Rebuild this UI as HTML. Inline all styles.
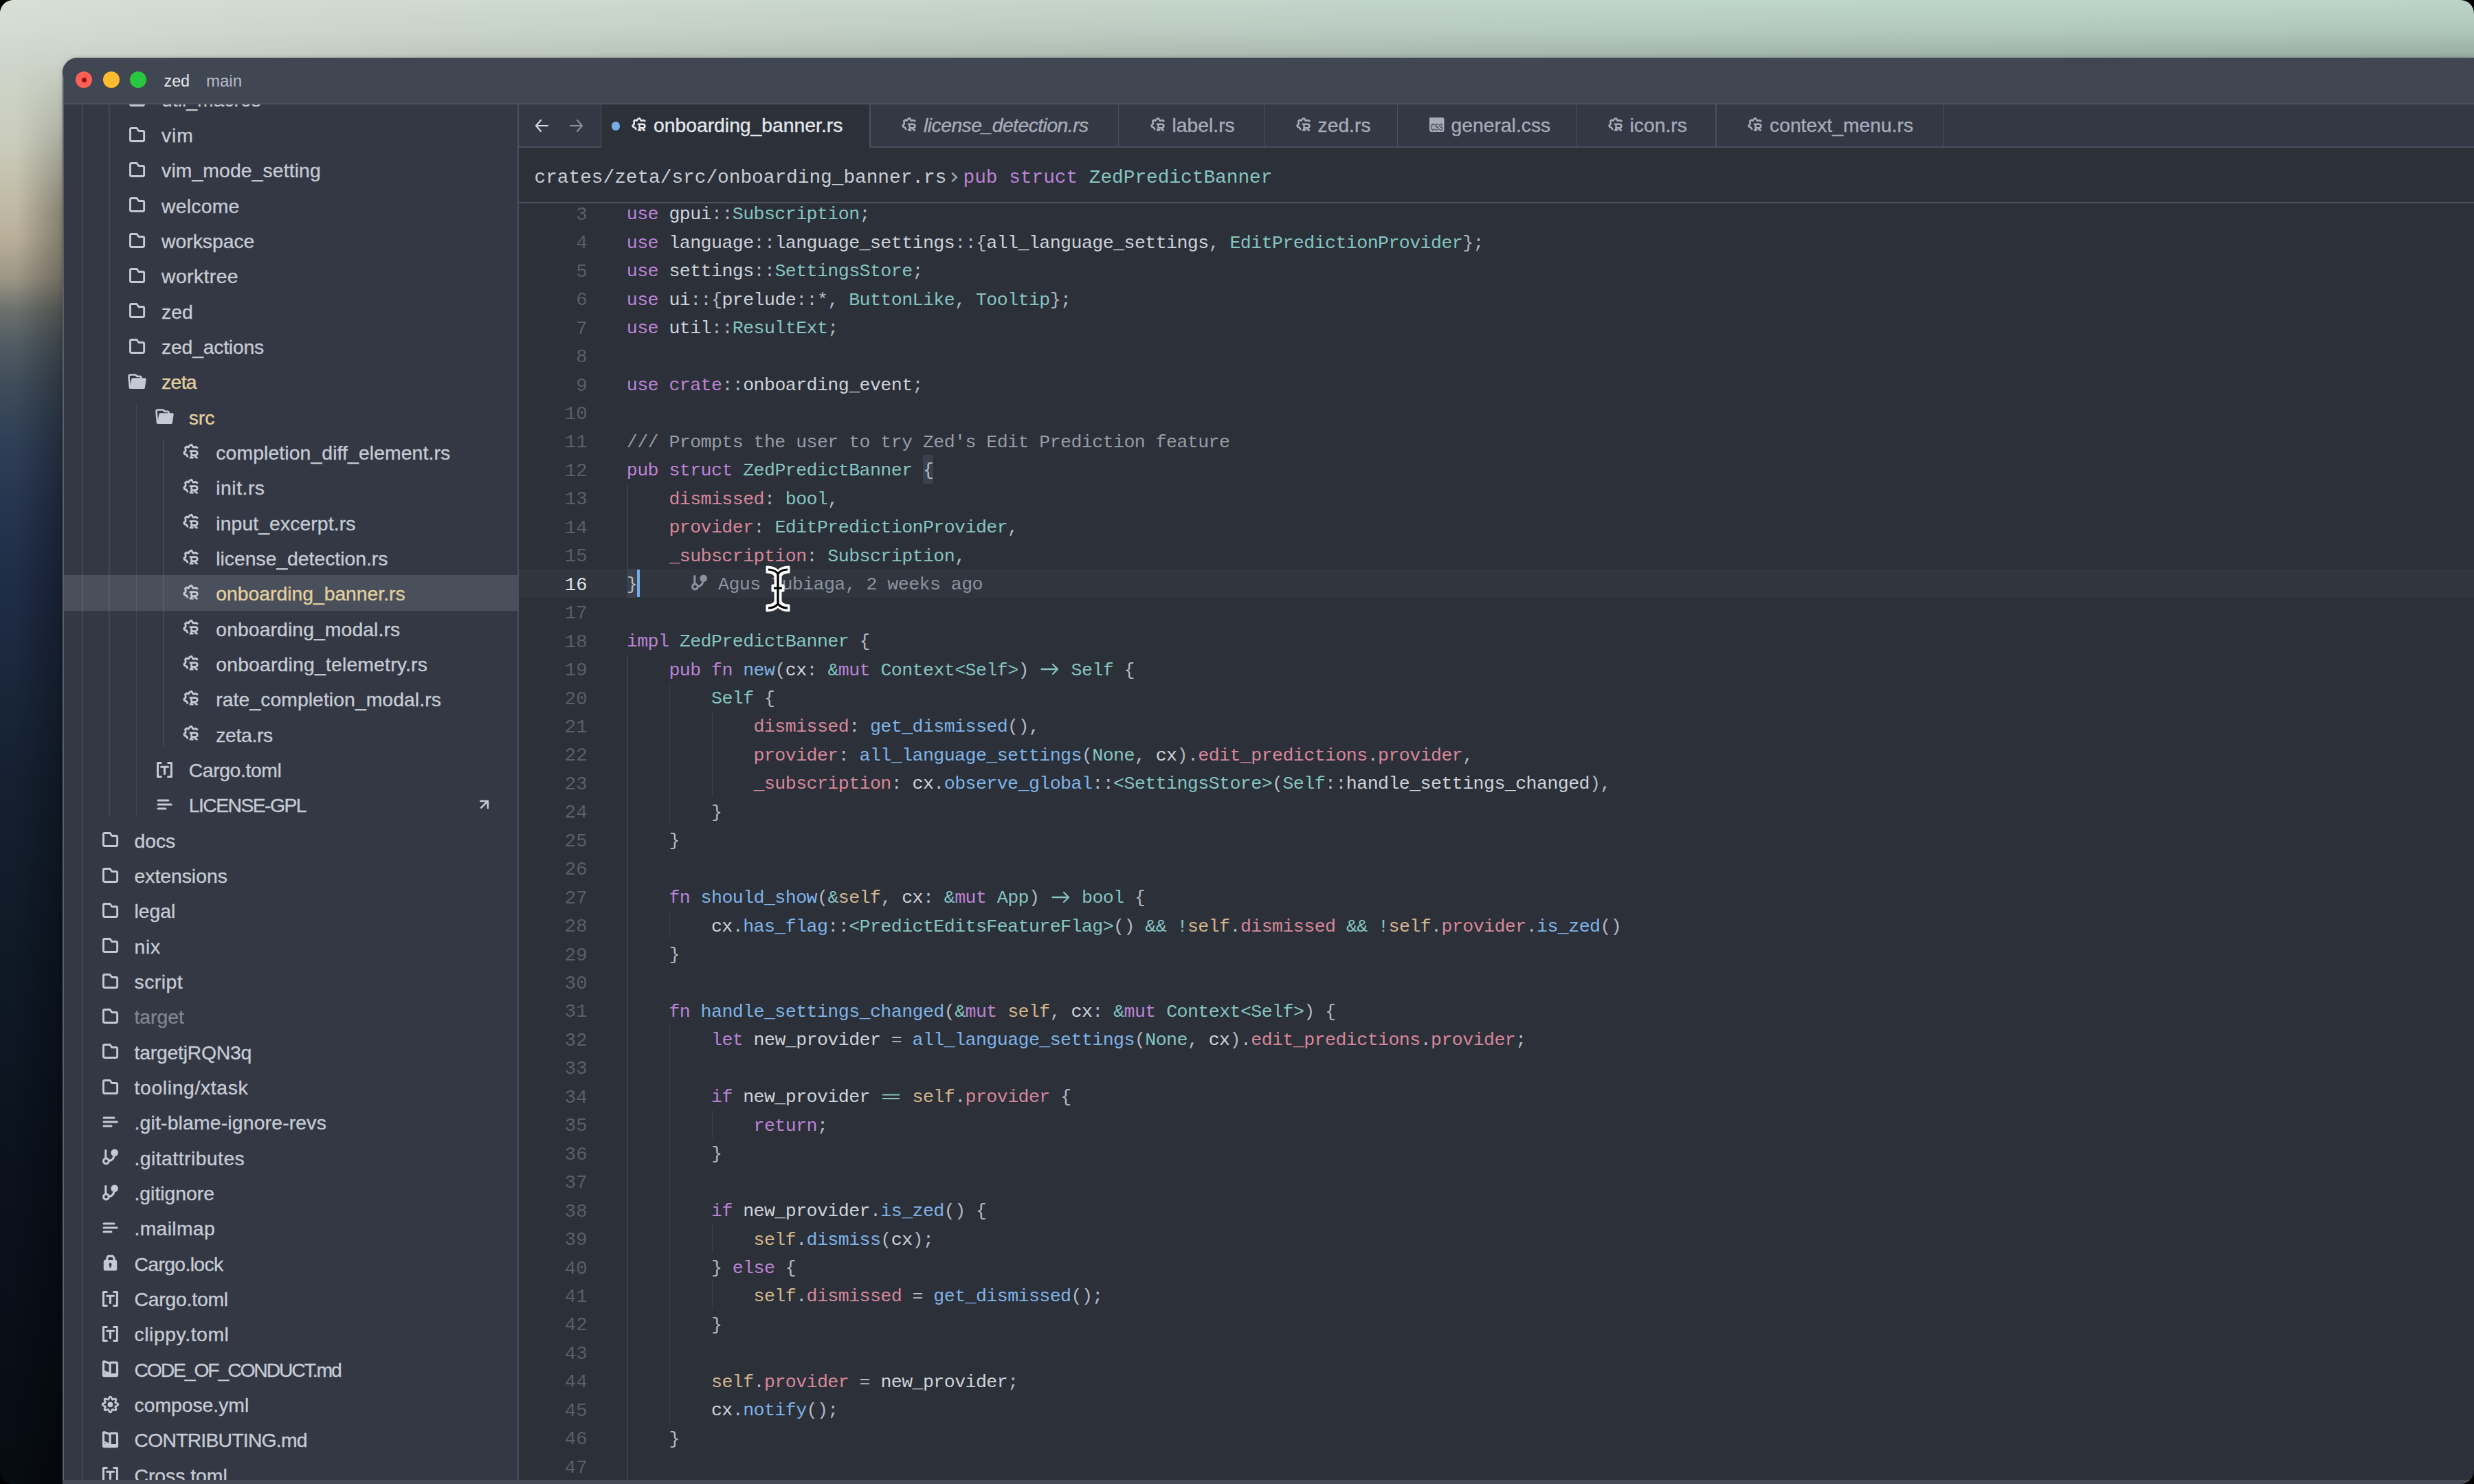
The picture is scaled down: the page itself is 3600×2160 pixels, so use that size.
<!DOCTYPE html><html><head><meta charset="utf-8"><title>zed</title><style>
*{box-sizing:border-box}
html,body{margin:0;padding:0;width:3600px;height:2160px;overflow:hidden;background:#000}
#frame{position:absolute;left:0;top:0;width:3600px;height:2160px;border-radius:20px;overflow:hidden;background:#060b14}
#leftstrip{position:absolute;left:0;top:0;width:151px;height:2160px;
 background:linear-gradient(180deg,#d8dfd5 0px,#d0d6cb 84px,#cacdbd 200px,#c2bca7 290px,#b9b09a 345px,#9d9686 405px,#6e716d 450px,#515c63 500px,#3e4c5a 560px,#303f56 640px,#26344f 740px,#1f2c46 850px,#1a273c 980px,#142030 1150px,#0f1926 1400px,#0b121d 1700px,#070c12 2160px)}
#leftshade{position:absolute;left:25px;top:84px;width:68px;height:2076px;background:linear-gradient(90deg,rgba(0,0,0,0),rgba(0,0,0,0.3));-webkit-mask-image:linear-gradient(180deg,transparent 0px,black 220px)}
#topband{position:absolute;left:0;top:0;width:3600px;height:114px;
 background:linear-gradient(90deg,#d8dfd5 0px,#d2dbd1 500px,#c7d6cb 1500px,#bfd6cb 2500px,#bcd5ca 3600px);
 -webkit-mask-image:linear-gradient(180deg,black 84px,transparent 114px)}
#topshade{position:absolute;left:0;top:0;width:3600px;height:114px;background:linear-gradient(90deg,rgba(0,0,0,0.04) 0px,rgba(0,0,0,0.10) 900px,rgba(0,0,0,0.2) 3600px);
 -webkit-mask-image:linear-gradient(180deg,transparent 0px,rgba(0,0,0,0.35) 45px,black 84px,transparent 114px)}
#win{position:absolute;left:91px;top:84px;width:3509px;height:2076px;border-top-left-radius:22px;overflow:hidden;background:#2b3039;box-shadow:0 0 6px rgba(0,0,0,0.18)}
.abs{position:absolute}
.sbt{position:absolute;font-family:"Liberation Sans",sans-serif;font-size:28.3px;line-height:51.34px;white-space:pre;-webkit-text-stroke:0.35px currentColor}
.tabt{position:absolute;top:152px;font-family:"Liberation Sans",sans-serif;font-size:28.3px;line-height:61px;white-space:pre;-webkit-text-stroke:0.35px currentColor}
.ln{position:absolute;left:780px;width:74.5px;text-align:right;font-family:"Liberation Mono",monospace;font-size:27.2px;line-height:41.45px;padding-top:2.5px;white-space:pre}
.cl{position:absolute;left:911.8px;font-family:"Liberation Mono",monospace;font-size:26.6px;letter-spacing:-0.562px;line-height:41.45px;padding-top:3px;white-space:pre;color:#cfd3db}
.lig{display:inline-block;position:relative;width:30.80px;height:1px}
.kw{color:#bd83d6} .ty{color:#86c5c1} .fn{color:#7fb3e8} .pr{color:#d8879a} .sf{color:#d3b68c}
.p{color:#b4bac4} .doc{color:#979ca6} .t{color:#cfd3db} .op{color:#86c5c1}
</style></head><body>
<div id="frame"><div id="leftstrip"></div><div id="topband"></div><div id="topshade"></div><div id="leftshade"></div>
<div id="win">
<div style="position:absolute;left:-91px;top:-84px;width:3600px;height:2160px">
<div style="position:absolute;left:91px;top:84px;right:0;height:67px;background:#414653"></div>
<div style="position:absolute;left:91px;top:150px;right:0;height:2px;background:#4b505c"></div>
<div style="position:absolute;left:110px;top:104px;width:24px;height:24px;border-radius:50%;background:#fe5f57"></div>
<div style="position:absolute;left:150px;top:104px;width:24px;height:24px;border-radius:50%;background:#febc2e"></div>
<div style="position:absolute;left:189px;top:104px;width:24px;height:24px;border-radius:50%;background:#28c840"></div>
<div style="position:absolute;left:118.5px;top:112.5px;width:7px;height:7px;border-radius:50%;background:#8d0f0a"></div>
<div style="position:absolute;left:238.5px;top:85px;height:67px;line-height:67px;font-family:'Liberation Sans';font-size:23.3px;color:#e6e9ee;white-space:pre">zed</div>
<div style="position:absolute;left:300px;top:84px;height:67px;line-height:67px;font-family:'Liberation Sans';font-size:24px;color:#b4bac5;white-space:pre">main</div>
<div style="position:absolute;left:91px;top:152px;width:662px;height:2002px;background:#333844;overflow:hidden">
<div style="position:absolute;left:-91px;top:-152px;width:3600px;height:2160px">
<div style="position:absolute;left:92px;top:837.25px;width:661px;height:51.34px;background:#4a4f5c"></div>
<div style="position:absolute;left:119.25px;top:23.81px;width:1.5px;height:2499.66px;background:rgba(255,255,255,0.08)"></div>
<div style="position:absolute;left:158.25px;top:23.81px;width:1.5px;height:1164.82px;background:rgba(255,255,255,0.08)"></div>
<div style="position:absolute;left:197.75px;top:588.55px;width:1.5px;height:600.08px;background:rgba(255,255,255,0.08)"></div>
<div style="position:absolute;left:237.25px;top:639.89px;width:1.5px;height:446.06px;background:rgba(255,255,255,0.08)"></div>
<div style="position:absolute;left:187.10px;top:132.16px;width:24px;height:24px"><svg width="24" height="24" viewBox="0 0 24 24" style="overflow:visible"><path d="M2.5 4.5 Q2.5 2.5 4.5 2.5 H12 L14.8 6.5 H20.65 Q22.65 6.5 22.65 8.5 V19.5 Q22.65 21.5 20.65 21.5 H4.5 Q2.5 21.5 2.5 19.5 Z" fill="none" stroke="#c4c9d3" stroke-width="2.9" stroke-linejoin="round"/></svg></div>
<div class="sbt" style="left:235.10px;top:120.49px;color:#c6cbd4;letter-spacing:0.000px">util_macros</div>
<div style="position:absolute;left:187.10px;top:183.50px;width:24px;height:24px"><svg width="24" height="24" viewBox="0 0 24 24" style="overflow:visible"><path d="M2.5 4.5 Q2.5 2.5 4.5 2.5 H12 L14.8 6.5 H20.65 Q22.65 6.5 22.65 8.5 V19.5 Q22.65 21.5 20.65 21.5 H4.5 Q2.5 21.5 2.5 19.5 Z" fill="none" stroke="#c4c9d3" stroke-width="2.9" stroke-linejoin="round"/></svg></div>
<div class="sbt" style="left:235.10px;top:171.83px;color:#c6cbd4;letter-spacing:0.800px">vim</div>
<div style="position:absolute;left:187.10px;top:234.84px;width:24px;height:24px"><svg width="24" height="24" viewBox="0 0 24 24" style="overflow:visible"><path d="M2.5 4.5 Q2.5 2.5 4.5 2.5 H12 L14.8 6.5 H20.65 Q22.65 6.5 22.65 8.5 V19.5 Q22.65 21.5 20.65 21.5 H4.5 Q2.5 21.5 2.5 19.5 Z" fill="none" stroke="#c4c9d3" stroke-width="2.9" stroke-linejoin="round"/></svg></div>
<div class="sbt" style="left:235.10px;top:223.17px;color:#c6cbd4;letter-spacing:0.133px">vim_mode_setting</div>
<div style="position:absolute;left:187.10px;top:286.18px;width:24px;height:24px"><svg width="24" height="24" viewBox="0 0 24 24" style="overflow:visible"><path d="M2.5 4.5 Q2.5 2.5 4.5 2.5 H12 L14.8 6.5 H20.65 Q22.65 6.5 22.65 8.5 V19.5 Q22.65 21.5 20.65 21.5 H4.5 Q2.5 21.5 2.5 19.5 Z" fill="none" stroke="#c4c9d3" stroke-width="2.9" stroke-linejoin="round"/></svg></div>
<div class="sbt" style="left:235.10px;top:274.51px;color:#c6cbd4;letter-spacing:0.267px">welcome</div>
<div style="position:absolute;left:187.10px;top:337.52px;width:24px;height:24px"><svg width="24" height="24" viewBox="0 0 24 24" style="overflow:visible"><path d="M2.5 4.5 Q2.5 2.5 4.5 2.5 H12 L14.8 6.5 H20.65 Q22.65 6.5 22.65 8.5 V19.5 Q22.65 21.5 20.65 21.5 H4.5 Q2.5 21.5 2.5 19.5 Z" fill="none" stroke="#c4c9d3" stroke-width="2.9" stroke-linejoin="round"/></svg></div>
<div class="sbt" style="left:235.10px;top:325.85px;color:#c6cbd4;letter-spacing:0.000px">workspace</div>
<div style="position:absolute;left:187.10px;top:388.86px;width:24px;height:24px"><svg width="24" height="24" viewBox="0 0 24 24" style="overflow:visible"><path d="M2.5 4.5 Q2.5 2.5 4.5 2.5 H12 L14.8 6.5 H20.65 Q22.65 6.5 22.65 8.5 V19.5 Q22.65 21.5 20.65 21.5 H4.5 Q2.5 21.5 2.5 19.5 Z" fill="none" stroke="#c4c9d3" stroke-width="2.9" stroke-linejoin="round"/></svg></div>
<div class="sbt" style="left:235.10px;top:377.19px;color:#c6cbd4;letter-spacing:0.429px">worktree</div>
<div style="position:absolute;left:187.10px;top:440.20px;width:24px;height:24px"><svg width="24" height="24" viewBox="0 0 24 24" style="overflow:visible"><path d="M2.5 4.5 Q2.5 2.5 4.5 2.5 H12 L14.8 6.5 H20.65 Q22.65 6.5 22.65 8.5 V19.5 Q22.65 21.5 20.65 21.5 H4.5 Q2.5 21.5 2.5 19.5 Z" fill="none" stroke="#c4c9d3" stroke-width="2.9" stroke-linejoin="round"/></svg></div>
<div class="sbt" style="left:235.10px;top:428.53px;color:#c6cbd4;letter-spacing:0.000px">zed</div>
<div style="position:absolute;left:187.10px;top:491.54px;width:24px;height:24px"><svg width="24" height="24" viewBox="0 0 24 24" style="overflow:visible"><path d="M2.5 4.5 Q2.5 2.5 4.5 2.5 H12 L14.8 6.5 H20.65 Q22.65 6.5 22.65 8.5 V19.5 Q22.65 21.5 20.65 21.5 H4.5 Q2.5 21.5 2.5 19.5 Z" fill="none" stroke="#c4c9d3" stroke-width="2.9" stroke-linejoin="round"/></svg></div>
<div class="sbt" style="left:235.10px;top:479.87px;color:#c6cbd4;letter-spacing:-0.190px">zed_actions</div>
<div style="position:absolute;left:187.10px;top:542.88px;width:24px;height:24px"><svg width="24" height="24" viewBox="0 0 24 24" style="overflow:visible"><g transform="translate(-1.6,-0.4)"><path d="M3.6 21.8 L2.1 5.2 Q2.0 2.9 4.3 2.9 H12.1 L14 5.3 H18.3 Q20.1 5.3 20.1 7.1 V8.6" fill="none" stroke="#c4c9d3" stroke-width="2.6" stroke-linejoin="round" stroke-linecap="round"/><path d="M7.8 7.6 H25.6 Q27.6 7.6 27.3 9.6 L25.4 21.9 Q25.2 23.5 23.6 23.5 H5.2 Q3.4 23.5 3.6 21.7 L5.9 9.3 Q6.2 7.6 7.8 7.6 Z" fill="#c4c9d3"/></g></svg></div>
<div class="sbt" style="left:235.10px;top:531.21px;color:#e2d09f;letter-spacing:-0.667px">zeta</div>
<div style="position:absolute;left:226.70px;top:594.22px;width:24px;height:24px"><svg width="24" height="24" viewBox="0 0 24 24" style="overflow:visible"><g transform="translate(-1.6,-0.4)"><path d="M3.6 21.8 L2.1 5.2 Q2.0 2.9 4.3 2.9 H12.1 L14 5.3 H18.3 Q20.1 5.3 20.1 7.1 V8.6" fill="none" stroke="#c4c9d3" stroke-width="2.6" stroke-linejoin="round" stroke-linecap="round"/><path d="M7.8 7.6 H25.6 Q27.6 7.6 27.3 9.6 L25.4 21.9 Q25.2 23.5 23.6 23.5 H5.2 Q3.4 23.5 3.6 21.7 L5.9 9.3 Q6.2 7.6 7.8 7.6 Z" fill="#c4c9d3"/></g></svg></div>
<div class="sbt" style="left:274.70px;top:582.55px;color:#e2d09f;letter-spacing:0.000px">src</div>
<div style="position:absolute;left:266.30px;top:645.56px;width:24px;height:24px"><svg width="24" height="24" viewBox="0 0 24 24" style="overflow:visible"><path d="M21.1 5.7 L18.9 4.5 L15 5.1 L12.7 1.2 L10.1 2.3 L8.3 5.1 L5.8 4 L3.6 5.7 L4.2 8.8 L3.8 10.9 L1.7 12.6 L2.5 14.8 L5.3 15.9 L6.8 18.3" fill="none" stroke="#c4c9d3" stroke-width="2.8" stroke-linecap="round" stroke-linejoin="round"/><path d="M12.6 10.6 V20.2 M9.7 10.6 H17.4 Q21.2 10.6 21.2 13.6 Q21.2 16.6 17.4 16.6 H12.6 M9.7 20.2 H15.6 M16.6 16.8 L19.8 20.2 H21.7" fill="none" stroke="#c4c9d3" stroke-width="2.7" stroke-linejoin="round"/></svg></div>
<div class="sbt" style="left:314.30px;top:633.89px;color:#c6cbd4;letter-spacing:0.128px">completion_diff_element.rs</div>
<div style="position:absolute;left:266.30px;top:696.90px;width:24px;height:24px"><svg width="24" height="24" viewBox="0 0 24 24" style="overflow:visible"><path d="M21.1 5.7 L18.9 4.5 L15 5.1 L12.7 1.2 L10.1 2.3 L8.3 5.1 L5.8 4 L3.6 5.7 L4.2 8.8 L3.8 10.9 L1.7 12.6 L2.5 14.8 L5.3 15.9 L6.8 18.3" fill="none" stroke="#c4c9d3" stroke-width="2.8" stroke-linecap="round" stroke-linejoin="round"/><path d="M12.6 10.6 V20.2 M9.7 10.6 H17.4 Q21.2 10.6 21.2 13.6 Q21.2 16.6 17.4 16.6 H12.6 M9.7 20.2 H15.6 M16.6 16.8 L19.8 20.2 H21.7" fill="none" stroke="#c4c9d3" stroke-width="2.7" stroke-linejoin="round"/></svg></div>
<div class="sbt" style="left:314.30px;top:685.23px;color:#c6cbd4;letter-spacing:0.517px">init.rs</div>
<div style="position:absolute;left:266.30px;top:748.24px;width:24px;height:24px"><svg width="24" height="24" viewBox="0 0 24 24" style="overflow:visible"><path d="M21.1 5.7 L18.9 4.5 L15 5.1 L12.7 1.2 L10.1 2.3 L8.3 5.1 L5.8 4 L3.6 5.7 L4.2 8.8 L3.8 10.9 L1.7 12.6 L2.5 14.8 L5.3 15.9 L6.8 18.3" fill="none" stroke="#c4c9d3" stroke-width="2.8" stroke-linecap="round" stroke-linejoin="round"/><path d="M12.6 10.6 V20.2 M9.7 10.6 H17.4 Q21.2 10.6 21.2 13.6 Q21.2 16.6 17.4 16.6 H12.6 M9.7 20.2 H15.6 M16.6 16.8 L19.8 20.2 H21.7" fill="none" stroke="#c4c9d3" stroke-width="2.7" stroke-linejoin="round"/></svg></div>
<div class="sbt" style="left:314.30px;top:736.57px;color:#c6cbd4;letter-spacing:0.113px">input_excerpt.rs</div>
<div style="position:absolute;left:266.30px;top:799.58px;width:24px;height:24px"><svg width="24" height="24" viewBox="0 0 24 24" style="overflow:visible"><path d="M21.1 5.7 L18.9 4.5 L15 5.1 L12.7 1.2 L10.1 2.3 L8.3 5.1 L5.8 4 L3.6 5.7 L4.2 8.8 L3.8 10.9 L1.7 12.6 L2.5 14.8 L5.3 15.9 L6.8 18.3" fill="none" stroke="#c4c9d3" stroke-width="2.8" stroke-linecap="round" stroke-linejoin="round"/><path d="M12.6 10.6 V20.2 M9.7 10.6 H17.4 Q21.2 10.6 21.2 13.6 Q21.2 16.6 17.4 16.6 H12.6 M9.7 20.2 H15.6 M16.6 16.8 L19.8 20.2 H21.7" fill="none" stroke="#c4c9d3" stroke-width="2.7" stroke-linejoin="round"/></svg></div>
<div class="sbt" style="left:314.30px;top:787.91px;color:#c6cbd4;letter-spacing:0.000px">license_detection.rs</div>
<div style="position:absolute;left:266.30px;top:850.92px;width:24px;height:24px"><svg width="24" height="24" viewBox="0 0 24 24" style="overflow:visible"><path d="M21.1 5.7 L18.9 4.5 L15 5.1 L12.7 1.2 L10.1 2.3 L8.3 5.1 L5.8 4 L3.6 5.7 L4.2 8.8 L3.8 10.9 L1.7 12.6 L2.5 14.8 L5.3 15.9 L6.8 18.3" fill="none" stroke="#c4c9d3" stroke-width="2.8" stroke-linecap="round" stroke-linejoin="round"/><path d="M12.6 10.6 V20.2 M9.7 10.6 H17.4 Q21.2 10.6 21.2 13.6 Q21.2 16.6 17.4 16.6 H12.6 M9.7 20.2 H15.6 M16.6 16.8 L19.8 20.2 H21.7" fill="none" stroke="#c4c9d3" stroke-width="2.7" stroke-linejoin="round"/></svg></div>
<div class="sbt" style="left:314.30px;top:839.25px;color:#e2d09f;letter-spacing:0.000px">onboarding_banner.rs</div>
<div style="position:absolute;left:266.30px;top:902.26px;width:24px;height:24px"><svg width="24" height="24" viewBox="0 0 24 24" style="overflow:visible"><path d="M21.1 5.7 L18.9 4.5 L15 5.1 L12.7 1.2 L10.1 2.3 L8.3 5.1 L5.8 4 L3.6 5.7 L4.2 8.8 L3.8 10.9 L1.7 12.6 L2.5 14.8 L5.3 15.9 L6.8 18.3" fill="none" stroke="#c4c9d3" stroke-width="2.8" stroke-linecap="round" stroke-linejoin="round"/><path d="M12.6 10.6 V20.2 M9.7 10.6 H17.4 Q21.2 10.6 21.2 13.6 Q21.2 16.6 17.4 16.6 H12.6 M9.7 20.2 H15.6 M16.6 16.8 L19.8 20.2 H21.7" fill="none" stroke="#c4c9d3" stroke-width="2.7" stroke-linejoin="round"/></svg></div>
<div class="sbt" style="left:314.30px;top:890.59px;color:#c6cbd4;letter-spacing:0.111px">onboarding_modal.rs</div>
<div style="position:absolute;left:266.30px;top:953.60px;width:24px;height:24px"><svg width="24" height="24" viewBox="0 0 24 24" style="overflow:visible"><path d="M21.1 5.7 L18.9 4.5 L15 5.1 L12.7 1.2 L10.1 2.3 L8.3 5.1 L5.8 4 L3.6 5.7 L4.2 8.8 L3.8 10.9 L1.7 12.6 L2.5 14.8 L5.3 15.9 L6.8 18.3" fill="none" stroke="#c4c9d3" stroke-width="2.8" stroke-linecap="round" stroke-linejoin="round"/><path d="M12.6 10.6 V20.2 M9.7 10.6 H17.4 Q21.2 10.6 21.2 13.6 Q21.2 16.6 17.4 16.6 H12.6 M9.7 20.2 H15.6 M16.6 16.8 L19.8 20.2 H21.7" fill="none" stroke="#c4c9d3" stroke-width="2.7" stroke-linejoin="round"/></svg></div>
<div class="sbt" style="left:314.30px;top:941.93px;color:#c6cbd4;letter-spacing:0.205px">onboarding_telemetry.rs</div>
<div style="position:absolute;left:266.30px;top:1004.94px;width:24px;height:24px"><svg width="24" height="24" viewBox="0 0 24 24" style="overflow:visible"><path d="M21.1 5.7 L18.9 4.5 L15 5.1 L12.7 1.2 L10.1 2.3 L8.3 5.1 L5.8 4 L3.6 5.7 L4.2 8.8 L3.8 10.9 L1.7 12.6 L2.5 14.8 L5.3 15.9 L6.8 18.3" fill="none" stroke="#c4c9d3" stroke-width="2.8" stroke-linecap="round" stroke-linejoin="round"/><path d="M12.6 10.6 V20.2 M9.7 10.6 H17.4 Q21.2 10.6 21.2 13.6 Q21.2 16.6 17.4 16.6 H12.6 M9.7 20.2 H15.6 M16.6 16.8 L19.8 20.2 H21.7" fill="none" stroke="#c4c9d3" stroke-width="2.7" stroke-linejoin="round"/></svg></div>
<div class="sbt" style="left:314.30px;top:993.27px;color:#c6cbd4;letter-spacing:0.083px">rate_completion_modal.rs</div>
<div style="position:absolute;left:266.30px;top:1056.28px;width:24px;height:24px"><svg width="24" height="24" viewBox="0 0 24 24" style="overflow:visible"><path d="M21.1 5.7 L18.9 4.5 L15 5.1 L12.7 1.2 L10.1 2.3 L8.3 5.1 L5.8 4 L3.6 5.7 L4.2 8.8 L3.8 10.9 L1.7 12.6 L2.5 14.8 L5.3 15.9 L6.8 18.3" fill="none" stroke="#c4c9d3" stroke-width="2.8" stroke-linecap="round" stroke-linejoin="round"/><path d="M12.6 10.6 V20.2 M9.7 10.6 H17.4 Q21.2 10.6 21.2 13.6 Q21.2 16.6 17.4 16.6 H12.6 M9.7 20.2 H15.6 M16.6 16.8 L19.8 20.2 H21.7" fill="none" stroke="#c4c9d3" stroke-width="2.7" stroke-linejoin="round"/></svg></div>
<div class="sbt" style="left:314.30px;top:1044.61px;color:#c6cbd4;letter-spacing:-0.333px">zeta.rs</div>
<div style="position:absolute;left:226.70px;top:1107.62px;width:24px;height:24px"><svg width="24" height="24" viewBox="0 0 24 24" style="overflow:visible"><path d="M7.3 2.55 H2.5 V22.6 H7.3 M17.6 2.55 H22.4 V22.6 H17.6" fill="none" stroke="#c4c9d3" stroke-width="3" stroke-linejoin="round" stroke-linecap="round"/><path d="M7.6 8.3 H17.6 M12.5 8.3 V18.4" fill="none" stroke="#c4c9d3" stroke-width="3.1" stroke-linecap="round"/></svg></div>
<div class="sbt" style="left:274.70px;top:1095.95px;color:#c6cbd4;letter-spacing:-0.356px">Cargo.toml</div>
<div style="position:absolute;left:226.70px;top:1158.96px;width:24px;height:24px"><svg width="24" height="24" viewBox="0 0 24 24" style="overflow:visible"><path d="M3 6.1 H17.9 M3 12 H22.2 M3 18 H14" fill="none" stroke="#c4c9d3" stroke-width="3" stroke-linecap="round"/></svg></div>
<div class="sbt" style="left:274.70px;top:1147.29px;color:#c6cbd4;letter-spacing:-1.530px">LICENSE-GPL</div>
<div style="position:absolute;left:147.50px;top:1210.30px;width:24px;height:24px"><svg width="24" height="24" viewBox="0 0 24 24" style="overflow:visible"><path d="M2.5 4.5 Q2.5 2.5 4.5 2.5 H12 L14.8 6.5 H20.65 Q22.65 6.5 22.65 8.5 V19.5 Q22.65 21.5 20.65 21.5 H4.5 Q2.5 21.5 2.5 19.5 Z" fill="none" stroke="#c4c9d3" stroke-width="2.9" stroke-linejoin="round"/></svg></div>
<div class="sbt" style="left:195.50px;top:1198.63px;color:#c6cbd4;letter-spacing:0.000px">docs</div>
<div style="position:absolute;left:147.50px;top:1261.64px;width:24px;height:24px"><svg width="24" height="24" viewBox="0 0 24 24" style="overflow:visible"><path d="M2.5 4.5 Q2.5 2.5 4.5 2.5 H12 L14.8 6.5 H20.65 Q22.65 6.5 22.65 8.5 V19.5 Q22.65 21.5 20.65 21.5 H4.5 Q2.5 21.5 2.5 19.5 Z" fill="none" stroke="#c4c9d3" stroke-width="2.9" stroke-linejoin="round"/></svg></div>
<div class="sbt" style="left:195.50px;top:1249.97px;color:#c6cbd4;letter-spacing:0.000px">extensions</div>
<div style="position:absolute;left:147.50px;top:1312.98px;width:24px;height:24px"><svg width="24" height="24" viewBox="0 0 24 24" style="overflow:visible"><path d="M2.5 4.5 Q2.5 2.5 4.5 2.5 H12 L14.8 6.5 H20.65 Q22.65 6.5 22.65 8.5 V19.5 Q22.65 21.5 20.65 21.5 H4.5 Q2.5 21.5 2.5 19.5 Z" fill="none" stroke="#c4c9d3" stroke-width="2.9" stroke-linejoin="round"/></svg></div>
<div class="sbt" style="left:195.50px;top:1301.31px;color:#c6cbd4;letter-spacing:0.000px">legal</div>
<div style="position:absolute;left:147.50px;top:1364.32px;width:24px;height:24px"><svg width="24" height="24" viewBox="0 0 24 24" style="overflow:visible"><path d="M2.5 4.5 Q2.5 2.5 4.5 2.5 H12 L14.8 6.5 H20.65 Q22.65 6.5 22.65 8.5 V19.5 Q22.65 21.5 20.65 21.5 H4.5 Q2.5 21.5 2.5 19.5 Z" fill="none" stroke="#c4c9d3" stroke-width="2.9" stroke-linejoin="round"/></svg></div>
<div class="sbt" style="left:195.50px;top:1352.65px;color:#c6cbd4;letter-spacing:0.750px">nix</div>
<div style="position:absolute;left:147.50px;top:1415.66px;width:24px;height:24px"><svg width="24" height="24" viewBox="0 0 24 24" style="overflow:visible"><path d="M2.5 4.5 Q2.5 2.5 4.5 2.5 H12 L14.8 6.5 H20.65 Q22.65 6.5 22.65 8.5 V19.5 Q22.65 21.5 20.65 21.5 H4.5 Q2.5 21.5 2.5 19.5 Z" fill="none" stroke="#c4c9d3" stroke-width="2.9" stroke-linejoin="round"/></svg></div>
<div class="sbt" style="left:195.50px;top:1403.99px;color:#c6cbd4;letter-spacing:0.500px">script</div>
<div style="position:absolute;left:147.50px;top:1467.00px;width:24px;height:24px"><svg width="24" height="24" viewBox="0 0 24 24" style="overflow:visible"><path d="M2.5 4.5 Q2.5 2.5 4.5 2.5 H12 L14.8 6.5 H20.65 Q22.65 6.5 22.65 8.5 V19.5 Q22.65 21.5 20.65 21.5 H4.5 Q2.5 21.5 2.5 19.5 Z" fill="none" stroke="#c4c9d3" stroke-width="2.9" stroke-linejoin="round"/></svg></div>
<div class="sbt" style="left:195.50px;top:1455.33px;color:#7f8590;letter-spacing:0.000px">target</div>
<div style="position:absolute;left:147.50px;top:1518.34px;width:24px;height:24px"><svg width="24" height="24" viewBox="0 0 24 24" style="overflow:visible"><path d="M2.5 4.5 Q2.5 2.5 4.5 2.5 H12 L14.8 6.5 H20.65 Q22.65 6.5 22.65 8.5 V19.5 Q22.65 21.5 20.65 21.5 H4.5 Q2.5 21.5 2.5 19.5 Z" fill="none" stroke="#c4c9d3" stroke-width="2.9" stroke-linejoin="round"/></svg></div>
<div class="sbt" style="left:195.50px;top:1506.67px;color:#c6cbd4;letter-spacing:-0.200px">targetjRQN3q</div>
<div style="position:absolute;left:147.50px;top:1569.68px;width:24px;height:24px"><svg width="24" height="24" viewBox="0 0 24 24" style="overflow:visible"><path d="M2.5 4.5 Q2.5 2.5 4.5 2.5 H12 L14.8 6.5 H20.65 Q22.65 6.5 22.65 8.5 V19.5 Q22.65 21.5 20.65 21.5 H4.5 Q2.5 21.5 2.5 19.5 Z" fill="none" stroke="#c4c9d3" stroke-width="2.9" stroke-linejoin="round"/></svg></div>
<div class="sbt" style="left:195.50px;top:1558.01px;color:#c6cbd4;letter-spacing:0.658px">tooling/xtask</div>
<div style="position:absolute;left:147.50px;top:1621.02px;width:24px;height:24px"><svg width="24" height="24" viewBox="0 0 24 24" style="overflow:visible"><path d="M3 6.1 H17.9 M3 12 H22.2 M3 18 H14" fill="none" stroke="#c4c9d3" stroke-width="3" stroke-linecap="round"/></svg></div>
<div class="sbt" style="left:195.50px;top:1609.35px;color:#c6cbd4;letter-spacing:0.195px">.git-blame-ignore-revs</div>
<div style="position:absolute;left:147.50px;top:1672.36px;width:24px;height:24px"><svg width="24" height="24" viewBox="0 0 24 24" style="overflow:visible"><path d="M5.8 2.5 V14" stroke="#c4c9d3" stroke-width="3" stroke-linecap="round"/><circle cx="6.4" cy="18" r="3.9" fill="none" stroke="#c4c9d3" stroke-width="3"/><circle cx="18.7" cy="5.7" r="5.3" fill="#c4c9d3"/><path d="M17.8 10.5 Q17.2 16.6 10.6 17.6" fill="none" stroke="#c4c9d3" stroke-width="3"/></svg></div>
<div class="sbt" style="left:195.50px;top:1660.69px;color:#c6cbd4;letter-spacing:0.469px">.gitattributes</div>
<div style="position:absolute;left:147.50px;top:1723.70px;width:24px;height:24px"><svg width="24" height="24" viewBox="0 0 24 24" style="overflow:visible"><path d="M5.8 2.5 V14" stroke="#c4c9d3" stroke-width="3" stroke-linecap="round"/><circle cx="6.4" cy="18" r="3.9" fill="none" stroke="#c4c9d3" stroke-width="3"/><circle cx="18.7" cy="5.7" r="5.3" fill="#c4c9d3"/><path d="M17.8 10.5 Q17.2 16.6 10.6 17.6" fill="none" stroke="#c4c9d3" stroke-width="3"/></svg></div>
<div class="sbt" style="left:195.50px;top:1712.03px;color:#c6cbd4;letter-spacing:0.000px">.gitignore</div>
<div style="position:absolute;left:147.50px;top:1775.04px;width:24px;height:24px"><svg width="24" height="24" viewBox="0 0 24 24" style="overflow:visible"><path d="M3 6.1 H17.9 M3 12 H22.2 M3 18 H14" fill="none" stroke="#c4c9d3" stroke-width="3" stroke-linecap="round"/></svg></div>
<div class="sbt" style="left:195.50px;top:1763.37px;color:#c6cbd4;letter-spacing:0.343px">.mailmap</div>
<div style="position:absolute;left:147.50px;top:1826.38px;width:24px;height:24px"><svg width="24" height="24" viewBox="0 0 24 24" style="overflow:visible"><path d="M6.8 8.8 L8.6 3.6 Q9.1 2.4 10.4 2.4 H15.3 Q16.6 2.4 17.1 3.6 L18.9 8.8" fill="none" stroke="#c4c9d3" stroke-width="3.2" stroke-linejoin="round"/><rect x="2.75" y="8.1" width="19.45" height="15.3" rx="2.2" fill="#c4c9d3"/><path d="M12.55 12 Q14.6 12 14.4 14.2 L13.6 18.6 Q13.4 19.3 12.55 19.3 Q11.7 19.3 11.5 18.6 L10.7 14.2 Q10.5 12 12.55 12 Z" fill="#323743"/></svg></div>
<div class="sbt" style="left:195.50px;top:1814.71px;color:#c6cbd4;letter-spacing:-0.633px">Cargo.lock</div>
<div style="position:absolute;left:147.50px;top:1877.72px;width:24px;height:24px"><svg width="24" height="24" viewBox="0 0 24 24" style="overflow:visible"><path d="M7.3 2.55 H2.5 V22.6 H7.3 M17.6 2.55 H22.4 V22.6 H17.6" fill="none" stroke="#c4c9d3" stroke-width="3" stroke-linejoin="round" stroke-linecap="round"/><path d="M7.6 8.3 H17.6 M12.5 8.3 V18.4" fill="none" stroke="#c4c9d3" stroke-width="3.1" stroke-linecap="round"/></svg></div>
<div class="sbt" style="left:195.50px;top:1866.05px;color:#c6cbd4;letter-spacing:-0.200px">Cargo.toml</div>
<div style="position:absolute;left:147.50px;top:1929.06px;width:24px;height:24px"><svg width="24" height="24" viewBox="0 0 24 24" style="overflow:visible"><path d="M7.3 2.55 H2.5 V22.6 H7.3 M17.6 2.55 H22.4 V22.6 H17.6" fill="none" stroke="#c4c9d3" stroke-width="3" stroke-linejoin="round" stroke-linecap="round"/><path d="M7.6 8.3 H17.6 M12.5 8.3 V18.4" fill="none" stroke="#c4c9d3" stroke-width="3.1" stroke-linecap="round"/></svg></div>
<div class="sbt" style="left:195.50px;top:1917.39px;color:#c6cbd4;letter-spacing:0.580px">clippy.toml</div>
<div style="position:absolute;left:147.50px;top:1980.40px;width:24px;height:24px"><svg width="24" height="24" viewBox="0 0 24 24" style="overflow:visible"><path d="M2.5 20 V2.9 Q2.5 1.3 4.1 1.7 L12.1 4.5 V19.5 M12.1 4.5 Q12.6 3.1 14.1 3.1 H20.8 Q22.5 3.1 22.5 4.8 V20" fill="none" stroke="#c4c9d3" stroke-width="3.2" stroke-linejoin="round"/><path d="M2.5 15.6 L12.1 19.6" fill="none" stroke="#c4c9d3" stroke-width="3"/><path d="M0.9 18.9 H24.1 V21.6 Q24.1 24.3 21.4 24.3 H3.6 Q0.9 24.3 0.9 21.6 Z" fill="#c4c9d3"/></svg></div>
<div class="sbt" style="left:195.50px;top:1968.73px;color:#c6cbd4;letter-spacing:-2.112px">CODE_OF_CONDUCT.md</div>
<div style="position:absolute;left:147.50px;top:2031.74px;width:24px;height:24px"><svg width="24" height="24" viewBox="0 0 24 24" style="overflow:visible"><path d="M12.50 0.95 L13.23 1.21 L13.87 1.91 L14.37 2.88 L14.76 3.87 L15.10 4.64 L15.50 5.05 L16.08 5.05 L16.86 4.74 L17.83 4.32 L18.88 3.99 L19.83 3.94 L20.53 4.27 L20.86 4.97 L20.81 5.92 L20.48 6.97 L20.06 7.94 L19.75 8.72 L19.75 9.30 L20.16 9.70 L20.93 10.04 L21.92 10.43 L22.89 10.93 L23.59 11.57 L23.85 12.30 L23.59 13.03 L22.89 13.67 L21.92 14.17 L20.93 14.56 L20.16 14.90 L19.75 15.30 L19.75 15.88 L20.06 16.66 L20.48 17.63 L20.81 18.68 L20.86 19.63 L20.53 20.33 L19.83 20.66 L18.88 20.61 L17.83 20.28 L16.86 19.86 L16.08 19.55 L15.50 19.55 L15.10 19.96 L14.76 20.73 L14.37 21.72 L13.87 22.69 L13.23 23.39 L12.50 23.65 L11.77 23.39 L11.13 22.69 L10.63 21.72 L10.24 20.73 L9.90 19.96 L9.50 19.55 L8.92 19.55 L8.14 19.86 L7.17 20.28 L6.12 20.61 L5.17 20.66 L4.47 20.33 L4.14 19.63 L4.19 18.68 L4.52 17.63 L4.94 16.66 L5.25 15.88 L5.25 15.30 L4.84 14.90 L4.07 14.56 L3.08 14.17 L2.11 13.67 L1.41 13.03 L1.15 12.30 L1.41 11.57 L2.11 10.93 L3.08 10.43 L4.07 10.04 L4.84 9.70 L5.25 9.30 L5.25 8.72 L4.94 7.94 L4.52 6.97 L4.19 5.92 L4.14 4.97 L4.47 4.27 L5.17 3.94 L6.12 3.99 L7.17 4.32 L8.14 4.74 L8.92 5.05 L9.50 5.05 L9.90 4.64 L10.24 3.87 L10.63 2.88 L11.13 1.91 L11.77 1.21 Z" fill="none" stroke="#c4c9d3" stroke-width="2.7" stroke-linejoin="round"/><circle cx="12.5" cy="12.3" r="3.9" fill="#c4c9d3"/></svg></div>
<div class="sbt" style="left:195.50px;top:2020.07px;color:#c6cbd4;letter-spacing:0.000px">compose.yml</div>
<div style="position:absolute;left:147.50px;top:2083.08px;width:24px;height:24px"><svg width="24" height="24" viewBox="0 0 24 24" style="overflow:visible"><path d="M2.5 20 V2.9 Q2.5 1.3 4.1 1.7 L12.1 4.5 V19.5 M12.1 4.5 Q12.6 3.1 14.1 3.1 H20.8 Q22.5 3.1 22.5 4.8 V20" fill="none" stroke="#c4c9d3" stroke-width="3.2" stroke-linejoin="round"/><path d="M2.5 15.6 L12.1 19.6" fill="none" stroke="#c4c9d3" stroke-width="3"/><path d="M0.9 18.9 H24.1 V21.6 Q24.1 24.3 21.4 24.3 H3.6 Q0.9 24.3 0.9 21.6 Z" fill="#c4c9d3"/></svg></div>
<div class="sbt" style="left:195.50px;top:2071.41px;color:#c6cbd4;letter-spacing:-0.750px">CONTRIBUTING.md</div>
<div style="position:absolute;left:147.50px;top:2134.42px;width:24px;height:24px"><svg width="24" height="24" viewBox="0 0 24 24" style="overflow:visible"><path d="M7.3 2.55 H2.5 V22.6 H7.3 M17.6 2.55 H22.4 V22.6 H17.6" fill="none" stroke="#c4c9d3" stroke-width="3" stroke-linejoin="round" stroke-linecap="round"/><path d="M7.6 8.3 H17.6 M12.5 8.3 V18.4" fill="none" stroke="#c4c9d3" stroke-width="3.1" stroke-linecap="round"/></svg></div>
<div class="sbt" style="left:195.50px;top:2122.75px;color:#c6cbd4;letter-spacing:0.000px">Cross.toml</div>
<svg style="position:absolute;left:696px;top:1161px" width="18" height="18" viewBox="0 0 18 18"><path d="M4 14.7 L13.9 5 M3.4 5 H13.9 V15.3" fill="none" stroke="#c4c9d3" stroke-width="2.6" stroke-linecap="round" stroke-linejoin="round"/></svg>
</div></div>
<div style="position:absolute;left:753px;top:152px;width:2px;height:2002px;background:#4a4f5b"></div>
<div style="position:absolute;left:91px;top:110px;width:1.5px;height:2050px;background:#5a5f6a"></div>
<div style="position:absolute;left:755px;top:152px;right:0;height:61px;background:#333844"></div>
<div style="position:absolute;left:755px;top:213px;right:0;height:2px;background:#4a4f5b"></div>
<svg style="position:absolute;left:777px;top:173px" width="22" height="22" viewBox="0 0 22 22"><path d="M20 10 H3 M10 2 L3 10 L10 18" fill="none" stroke="#d5d9e0" stroke-width="2.2" stroke-linecap="round" stroke-linejoin="round"/></svg>
<svg style="position:absolute;left:828px;top:173px" width="22" height="22" viewBox="0 0 22 22"><path d="M2 10 H19 M12 2 L19 10 L12 18" fill="none" stroke="#8a909b" stroke-width="2.2" stroke-linecap="round" stroke-linejoin="round"/></svg>
<div style="position:absolute;left:873.5px;top:152px;width:1.5px;height:63px;background:#4a4f5b"></div>
<div style="position:absolute;left:875px;top:152px;width:391px;height:64px;background:#2b3039"></div>
<div style="position:absolute;left:1265.25px;top:152px;width:1.5px;height:63px;background:#4a4f5b"></div>
<div style="position:absolute;left:889.7px;top:177.2px;width:12.6px;height:12.6px;border-radius:50%;background:#74ade8"></div>
<div style="position:absolute;left:918.00px;top:170px;width:24px;height:24px;transform:scale(0.92)"><svg width="24" height="24" viewBox="0 0 24 24" style="overflow:visible"><path d="M21.1 5.7 L18.9 4.5 L15 5.1 L12.7 1.2 L10.1 2.3 L8.3 5.1 L5.8 4 L3.6 5.7 L4.2 8.8 L3.8 10.9 L1.7 12.6 L2.5 14.8 L5.3 15.9 L6.8 18.3" fill="none" stroke="#e4e7ec" stroke-width="2.8" stroke-linecap="round" stroke-linejoin="round"/><path d="M12.6 10.6 V20.2 M9.7 10.6 H17.4 Q21.2 10.6 21.2 13.6 Q21.2 16.6 17.4 16.6 H12.6 M9.7 20.2 H15.6 M16.6 16.8 L19.8 20.2 H21.7" fill="none" stroke="#e4e7ec" stroke-width="2.7" stroke-linejoin="round"/></svg></div>
<div class="tabt" style="left:951.00px;color:#e4e7ec">onboarding_banner.rs</div>
<div style="position:absolute;left:1626.75px;top:152px;width:1.5px;height:63px;background:#4a4f5b"></div>
<div style="position:absolute;left:1311.00px;top:170px;width:24px;height:24px;transform:scale(0.92)"><svg width="24" height="24" viewBox="0 0 24 24" style="overflow:visible"><path d="M21.1 5.7 L18.9 4.5 L15 5.1 L12.7 1.2 L10.1 2.3 L8.3 5.1 L5.8 4 L3.6 5.7 L4.2 8.8 L3.8 10.9 L1.7 12.6 L2.5 14.8 L5.3 15.9 L6.8 18.3" fill="none" stroke="#a6acb8" stroke-width="2.8" stroke-linecap="round" stroke-linejoin="round"/><path d="M12.6 10.6 V20.2 M9.7 10.6 H17.4 Q21.2 10.6 21.2 13.6 Q21.2 16.6 17.4 16.6 H12.6 M9.7 20.2 H15.6 M16.6 16.8 L19.8 20.2 H21.7" fill="none" stroke="#a6acb8" stroke-width="2.7" stroke-linejoin="round"/></svg></div>
<div class="tabt" style="left:1344.00px;font-style:italic;letter-spacing:-0.52px;color:#a6acb8">license_detection.rs</div>
<div style="position:absolute;left:1838.75px;top:152px;width:1.5px;height:63px;background:#4a4f5b"></div>
<div style="position:absolute;left:1672.50px;top:170px;width:24px;height:24px;transform:scale(0.92)"><svg width="24" height="24" viewBox="0 0 24 24" style="overflow:visible"><path d="M21.1 5.7 L18.9 4.5 L15 5.1 L12.7 1.2 L10.1 2.3 L8.3 5.1 L5.8 4 L3.6 5.7 L4.2 8.8 L3.8 10.9 L1.7 12.6 L2.5 14.8 L5.3 15.9 L6.8 18.3" fill="none" stroke="#a6acb8" stroke-width="2.8" stroke-linecap="round" stroke-linejoin="round"/><path d="M12.6 10.6 V20.2 M9.7 10.6 H17.4 Q21.2 10.6 21.2 13.6 Q21.2 16.6 17.4 16.6 H12.6 M9.7 20.2 H15.6 M16.6 16.8 L19.8 20.2 H21.7" fill="none" stroke="#a6acb8" stroke-width="2.7" stroke-linejoin="round"/></svg></div>
<div class="tabt" style="left:1705.50px;color:#a6acb8">label.rs</div>
<div style="position:absolute;left:2032.75px;top:152px;width:1.5px;height:63px;background:#4a4f5b"></div>
<div style="position:absolute;left:1884.50px;top:170px;width:24px;height:24px;transform:scale(0.92)"><svg width="24" height="24" viewBox="0 0 24 24" style="overflow:visible"><path d="M21.1 5.7 L18.9 4.5 L15 5.1 L12.7 1.2 L10.1 2.3 L8.3 5.1 L5.8 4 L3.6 5.7 L4.2 8.8 L3.8 10.9 L1.7 12.6 L2.5 14.8 L5.3 15.9 L6.8 18.3" fill="none" stroke="#a6acb8" stroke-width="2.8" stroke-linecap="round" stroke-linejoin="round"/><path d="M12.6 10.6 V20.2 M9.7 10.6 H17.4 Q21.2 10.6 21.2 13.6 Q21.2 16.6 17.4 16.6 H12.6 M9.7 20.2 H15.6 M16.6 16.8 L19.8 20.2 H21.7" fill="none" stroke="#a6acb8" stroke-width="2.7" stroke-linejoin="round"/></svg></div>
<div class="tabt" style="left:1917.50px;color:#a6acb8">zed.rs</div>
<div style="position:absolute;left:2292.75px;top:152px;width:1.5px;height:63px;background:#4a4f5b"></div>
<svg style="position:absolute;left:2079.5px;top:171px" width="22" height="22" viewBox="0 0 22 22"><path d="M0 0 H18.5 Q21.5 0 21.5 3 V18 Q21.5 21 18.5 21 H3 Q0 21 0 18 Z" fill="#a6acb8"/><text x="2" y="19" textLength="17.5" lengthAdjust="spacingAndGlyphs" font-family="Liberation Sans" font-size="18.5" fill="#323743">css</text></svg>
<div class="tabt" style="left:2111.50px;color:#a6acb8">general.css</div>
<div style="position:absolute;left:2496.25px;top:152px;width:1.5px;height:63px;background:#4a4f5b"></div>
<div style="position:absolute;left:2338.50px;top:170px;width:24px;height:24px;transform:scale(0.92)"><svg width="24" height="24" viewBox="0 0 24 24" style="overflow:visible"><path d="M21.1 5.7 L18.9 4.5 L15 5.1 L12.7 1.2 L10.1 2.3 L8.3 5.1 L5.8 4 L3.6 5.7 L4.2 8.8 L3.8 10.9 L1.7 12.6 L2.5 14.8 L5.3 15.9 L6.8 18.3" fill="none" stroke="#a6acb8" stroke-width="2.8" stroke-linecap="round" stroke-linejoin="round"/><path d="M12.6 10.6 V20.2 M9.7 10.6 H17.4 Q21.2 10.6 21.2 13.6 Q21.2 16.6 17.4 16.6 H12.6 M9.7 20.2 H15.6 M16.6 16.8 L19.8 20.2 H21.7" fill="none" stroke="#a6acb8" stroke-width="2.7" stroke-linejoin="round"/></svg></div>
<div class="tabt" style="left:2371.50px;color:#a6acb8">icon.rs</div>
<div style="position:absolute;left:2827.75px;top:152px;width:1.5px;height:63px;background:#4a4f5b"></div>
<div style="position:absolute;left:2542.00px;top:170px;width:24px;height:24px;transform:scale(0.92)"><svg width="24" height="24" viewBox="0 0 24 24" style="overflow:visible"><path d="M21.1 5.7 L18.9 4.5 L15 5.1 L12.7 1.2 L10.1 2.3 L8.3 5.1 L5.8 4 L3.6 5.7 L4.2 8.8 L3.8 10.9 L1.7 12.6 L2.5 14.8 L5.3 15.9 L6.8 18.3" fill="none" stroke="#a6acb8" stroke-width="2.8" stroke-linecap="round" stroke-linejoin="round"/><path d="M12.6 10.6 V20.2 M9.7 10.6 H17.4 Q21.2 10.6 21.2 13.6 Q21.2 16.6 17.4 16.6 H12.6 M9.7 20.2 H15.6 M16.6 16.8 L19.8 20.2 H21.7" fill="none" stroke="#a6acb8" stroke-width="2.7" stroke-linejoin="round"/></svg></div>
<div class="tabt" style="left:2575.00px;color:#a6acb8">context_menu.rs</div>
<div style="position:absolute;left:755px;top:294px;right:0;height:2px;background:#4a4f5b"></div>
<div style="position:absolute;left:777.5px;top:218.5px;font-family:'Liberation Mono';font-size:27.78px;line-height:79px;white-space:pre;color:#c9cdd5">crates/zeta/src/onboarding_banner.rs</div>
<svg style="position:absolute;left:1383px;top:250px" width="12" height="16" viewBox="0 0 12 16"><path d="M3 2.5 L9 8 L3 13.5" fill="none" stroke="#9aa0aa" stroke-width="2.6" stroke-linecap="round" stroke-linejoin="round"/></svg>
<div style="position:absolute;left:1401.5px;top:218.5px;font-family:'Liberation Mono';font-size:27.78px;line-height:79px;white-space:pre"><span style="color:#bd83d6">pub struct</span> <span style="color:#86c5c1">ZedPredictBanner</span></div>
<div style="position:absolute;left:755px;top:296px;width:2845px;height:1858px;overflow:hidden">
<div style="position:absolute;left:-755px;top:-296px;width:3600px;height:2160px">
<div style="position:absolute;left:755px;top:828.20px;width:2845px;height:41.45px;background:#30353e"></div>
<div style="position:absolute;left:1343.00px;top:662.40px;width:15.40px;height:41.45px;background:#3b414c"></div>
<div style="position:absolute;left:911.80px;top:828.20px;width:15.40px;height:41.45px;background:#3b414c"></div>
<div style="position:absolute;left:912.30px;top:703.85px;width:1.5px;height:124.35px;background:rgba(255,255,255,0.08)"></div>
<div style="position:absolute;left:912.30px;top:952.55px;width:1.5px;height:1201.45px;background:rgba(255,255,255,0.08)"></div>
<div style="position:absolute;left:973.90px;top:994.00px;width:1.5px;height:207.25px;background:rgba(255,255,255,0.08)"></div>
<div style="position:absolute;left:973.90px;top:1325.60px;width:1.5px;height:41.45px;background:rgba(255,255,255,0.08)"></div>
<div style="position:absolute;left:973.90px;top:1491.40px;width:1.5px;height:580.30px;background:rgba(255,255,255,0.08)"></div>
<div style="position:absolute;left:1035.50px;top:1035.45px;width:1.5px;height:124.35px;background:rgba(255,255,255,0.08)"></div>
<div style="position:absolute;left:1035.50px;top:1615.75px;width:1.5px;height:41.45px;background:rgba(255,255,255,0.08)"></div>
<div style="position:absolute;left:1035.50px;top:1781.55px;width:1.5px;height:41.45px;background:rgba(255,255,255,0.08)"></div>
<div style="position:absolute;left:1035.50px;top:1864.45px;width:1.5px;height:41.45px;background:rgba(255,255,255,0.08)"></div>
<div class="ln" style="top:289.35px;color:#576166">3</div>
<div class="cl" style="top:289.35px"><span class="kw">use</span><span class="t"> gpui</span><span class="p">::</span><span class="ty">Subscription</span><span class="p">;</span></div>
<div class="ln" style="top:330.80px;color:#576166">4</div>
<div class="cl" style="top:330.80px"><span class="kw">use</span><span class="t"> language</span><span class="p">::</span><span class="t">language_settings</span><span class="p">::{</span><span class="t">all_language_settings</span><span class="p">, </span><span class="ty">EditPredictionProvider</span><span class="p">};</span></div>
<div class="ln" style="top:372.25px;color:#576166">5</div>
<div class="cl" style="top:372.25px"><span class="kw">use</span><span class="t"> settings</span><span class="p">::</span><span class="ty">SettingsStore</span><span class="p">;</span></div>
<div class="ln" style="top:413.70px;color:#576166">6</div>
<div class="cl" style="top:413.70px"><span class="kw">use</span><span class="t"> ui</span><span class="p">::{</span><span class="t">prelude</span><span class="p">::*, </span><span class="ty">ButtonLike</span><span class="p">, </span><span class="ty">Tooltip</span><span class="p">};</span></div>
<div class="ln" style="top:455.15px;color:#576166">7</div>
<div class="cl" style="top:455.15px"><span class="kw">use</span><span class="t"> util</span><span class="p">::</span><span class="ty">ResultExt</span><span class="p">;</span></div>
<div class="ln" style="top:496.60px;color:#576166">8</div>
<div class="ln" style="top:538.05px;color:#576166">9</div>
<div class="cl" style="top:538.05px"><span class="kw">use</span><span class="t"> </span><span class="kw">crate</span><span class="p">::</span><span class="t">onboarding_event</span><span class="p">;</span></div>
<div class="ln" style="top:579.50px;color:#576166">10</div>
<div class="ln" style="top:620.95px;color:#576166">11</div>
<div class="cl" style="top:620.95px"><span class="doc">/// Prompts the user to try Zed&#x27;s Edit Prediction feature</span></div>
<div class="ln" style="top:662.40px;color:#576166">12</div>
<div class="cl" style="top:662.40px"><span class="kw">pub</span><span class="t"> </span><span class="kw">struct</span><span class="t"> </span><span class="ty">ZedPredictBanner</span><span class="t"> </span><span class="p">{</span></div>
<div class="ln" style="top:703.85px;color:#576166">13</div>
<div class="cl" style="top:703.85px"><span class="t">    </span><span class="pr">dismissed</span><span class="p">: </span><span class="ty">bool</span><span class="p">,</span></div>
<div class="ln" style="top:745.30px;color:#576166">14</div>
<div class="cl" style="top:745.30px"><span class="t">    </span><span class="pr">provider</span><span class="p">: </span><span class="ty">EditPredictionProvider</span><span class="p">,</span></div>
<div class="ln" style="top:786.75px;color:#576166">15</div>
<div class="cl" style="top:786.75px"><span class="t">    </span><span class="pr">_subscription</span><span class="p">: </span><span class="ty">Subscription</span><span class="p">,</span></div>
<div class="ln" style="top:828.20px;color:#dfe2e7">16</div>
<div class="cl" style="top:828.20px"><span class="p">}</span></div>
<div class="ln" style="top:869.65px;color:#576166">17</div>
<div class="ln" style="top:911.10px;color:#576166">18</div>
<div class="cl" style="top:911.10px"><span class="kw">impl</span><span class="t"> </span><span class="ty">ZedPredictBanner</span><span class="t"> </span><span class="p">{</span></div>
<div class="ln" style="top:952.55px;color:#576166">19</div>
<div class="cl" style="top:952.55px"><span class="t">    </span><span class="kw">pub</span><span class="t"> </span><span class="kw">fn</span><span class="t"> </span><span class="fn">new</span><span class="p">(</span><span class="t">cx</span><span class="p">: </span><span class="op">&amp;</span><span class="kw">mut</span><span class="t"> </span><span class="ty">Context&lt;Self&gt;</span><span class="p">)</span><span class="t"> </span><span class="lig"><svg width="31" height="20" viewBox="0 0 31 20" style="position:absolute;left:0;top:-17.4px"><path d="M3.5 10 H27 M20 3 L27 10 L20 17" fill="none" stroke="#86c5c1" stroke-width="2.3" stroke-linecap="round" stroke-linejoin="round"/></svg></span><span class="t"> </span><span class="ty">Self</span><span class="t"> </span><span class="p">{</span></div>
<div class="ln" style="top:994.00px;color:#576166">20</div>
<div class="cl" style="top:994.00px"><span class="t">        </span><span class="ty">Self</span><span class="t"> </span><span class="p">{</span></div>
<div class="ln" style="top:1035.45px;color:#576166">21</div>
<div class="cl" style="top:1035.45px"><span class="t">            </span><span class="pr">dismissed</span><span class="p">: </span><span class="fn">get_dismissed</span><span class="p">(),</span></div>
<div class="ln" style="top:1076.90px;color:#576166">22</div>
<div class="cl" style="top:1076.90px"><span class="t">            </span><span class="pr">provider</span><span class="p">: </span><span class="fn">all_language_settings</span><span class="p">(</span><span class="ty">None</span><span class="p">, </span><span class="t">cx</span><span class="p">).</span><span class="pr">edit_predictions</span><span class="p">.</span><span class="pr">provider</span><span class="p">,</span></div>
<div class="ln" style="top:1118.35px;color:#576166">23</div>
<div class="cl" style="top:1118.35px"><span class="t">            </span><span class="pr">_subscription</span><span class="p">: </span><span class="t">cx</span><span class="p">.</span><span class="fn">observe_global</span><span class="p">::</span><span class="ty">&lt;SettingsStore&gt;</span><span class="p">(</span><span class="ty">Self</span><span class="p">::</span><span class="t">handle_settings_changed</span><span class="p">),</span></div>
<div class="ln" style="top:1159.80px;color:#576166">24</div>
<div class="cl" style="top:1159.80px"><span class="t">        </span><span class="p">}</span></div>
<div class="ln" style="top:1201.25px;color:#576166">25</div>
<div class="cl" style="top:1201.25px"><span class="t">    </span><span class="p">}</span></div>
<div class="ln" style="top:1242.70px;color:#576166">26</div>
<div class="ln" style="top:1284.15px;color:#576166">27</div>
<div class="cl" style="top:1284.15px"><span class="t">    </span><span class="kw">fn</span><span class="t"> </span><span class="fn">should_show</span><span class="p">(</span><span class="op">&amp;</span><span class="sf">self</span><span class="p">, </span><span class="t">cx</span><span class="p">: </span><span class="op">&amp;</span><span class="kw">mut</span><span class="t"> </span><span class="ty">App</span><span class="p">)</span><span class="t"> </span><span class="lig"><svg width="31" height="20" viewBox="0 0 31 20" style="position:absolute;left:0;top:-17.4px"><path d="M3.5 10 H27 M20 3 L27 10 L20 17" fill="none" stroke="#86c5c1" stroke-width="2.3" stroke-linecap="round" stroke-linejoin="round"/></svg></span><span class="t"> </span><span class="ty">bool</span><span class="t"> </span><span class="p">{</span></div>
<div class="ln" style="top:1325.60px;color:#576166">28</div>
<div class="cl" style="top:1325.60px"><span class="t">        cx</span><span class="p">.</span><span class="fn">has_flag</span><span class="p">::</span><span class="ty">&lt;PredictEditsFeatureFlag&gt;</span><span class="p">()</span><span class="t"> </span><span class="op">&amp;&amp;</span><span class="t"> </span><span class="op">!</span><span class="sf">self</span><span class="p">.</span><span class="pr">dismissed</span><span class="t"> </span><span class="op">&amp;&amp;</span><span class="t"> </span><span class="op">!</span><span class="sf">self</span><span class="p">.</span><span class="pr">provider</span><span class="p">.</span><span class="fn">is_zed</span><span class="p">()</span></div>
<div class="ln" style="top:1367.05px;color:#576166">29</div>
<div class="cl" style="top:1367.05px"><span class="t">    </span><span class="p">}</span></div>
<div class="ln" style="top:1408.50px;color:#576166">30</div>
<div class="ln" style="top:1449.95px;color:#576166">31</div>
<div class="cl" style="top:1449.95px"><span class="t">    </span><span class="kw">fn</span><span class="t"> </span><span class="fn">handle_settings_changed</span><span class="p">(</span><span class="op">&amp;</span><span class="kw">mut</span><span class="t"> </span><span class="sf">self</span><span class="p">, </span><span class="t">cx</span><span class="p">: </span><span class="op">&amp;</span><span class="kw">mut</span><span class="t"> </span><span class="ty">Context&lt;Self&gt;</span><span class="p">)</span><span class="t"> </span><span class="p">{</span></div>
<div class="ln" style="top:1491.40px;color:#576166">32</div>
<div class="cl" style="top:1491.40px"><span class="t">        </span><span class="kw">let</span><span class="t"> new_provider </span><span class="p">=</span><span class="t"> </span><span class="fn">all_language_settings</span><span class="p">(</span><span class="ty">None</span><span class="p">, </span><span class="t">cx</span><span class="p">).</span><span class="pr">edit_predictions</span><span class="p">.</span><span class="pr">provider</span><span class="p">;</span></div>
<div class="ln" style="top:1532.85px;color:#576166">33</div>
<div class="ln" style="top:1574.30px;color:#576166">34</div>
<div class="cl" style="top:1574.30px"><span class="t">        </span><span class="kw">if</span><span class="t"> new_provider </span><span class="lig"><svg width="31" height="20" viewBox="0 0 31 20" style="position:absolute;left:0;top:-16px"><path d="M3 6.5 H28 M3 12 H28" fill="none" stroke="#86c5c1" stroke-width="2.2"/></svg></span><span class="t"> </span><span class="sf">self</span><span class="p">.</span><span class="pr">provider</span><span class="t"> </span><span class="p">{</span></div>
<div class="ln" style="top:1615.75px;color:#576166">35</div>
<div class="cl" style="top:1615.75px"><span class="t">            </span><span class="kw">return</span><span class="p">;</span></div>
<div class="ln" style="top:1657.20px;color:#576166">36</div>
<div class="cl" style="top:1657.20px"><span class="t">        </span><span class="p">}</span></div>
<div class="ln" style="top:1698.65px;color:#576166">37</div>
<div class="ln" style="top:1740.10px;color:#576166">38</div>
<div class="cl" style="top:1740.10px"><span class="t">        </span><span class="kw">if</span><span class="t"> new_provider</span><span class="p">.</span><span class="fn">is_zed</span><span class="p">()</span><span class="t"> </span><span class="p">{</span></div>
<div class="ln" style="top:1781.55px;color:#576166">39</div>
<div class="cl" style="top:1781.55px"><span class="t">            </span><span class="sf">self</span><span class="p">.</span><span class="fn">dismiss</span><span class="p">(</span><span class="t">cx</span><span class="p">);</span></div>
<div class="ln" style="top:1823.00px;color:#576166">40</div>
<div class="cl" style="top:1823.00px"><span class="t">        </span><span class="p">}</span><span class="t"> </span><span class="kw">else</span><span class="t"> </span><span class="p">{</span></div>
<div class="ln" style="top:1864.45px;color:#576166">41</div>
<div class="cl" style="top:1864.45px"><span class="t">            </span><span class="sf">self</span><span class="p">.</span><span class="pr">dismissed</span><span class="t"> </span><span class="p">=</span><span class="t"> </span><span class="fn">get_dismissed</span><span class="p">();</span></div>
<div class="ln" style="top:1905.90px;color:#576166">42</div>
<div class="cl" style="top:1905.90px"><span class="t">        </span><span class="p">}</span></div>
<div class="ln" style="top:1947.35px;color:#576166">43</div>
<div class="ln" style="top:1988.80px;color:#576166">44</div>
<div class="cl" style="top:1988.80px"><span class="t">        </span><span class="sf">self</span><span class="p">.</span><span class="pr">provider</span><span class="t"> </span><span class="p">=</span><span class="t"> new_provider</span><span class="p">;</span></div>
<div class="ln" style="top:2030.25px;color:#576166">45</div>
<div class="cl" style="top:2030.25px"><span class="t">        cx</span><span class="p">.</span><span class="fn">notify</span><span class="p">();</span></div>
<div class="ln" style="top:2071.70px;color:#576166">46</div>
<div class="cl" style="top:2071.70px"><span class="t">    </span><span class="p">}</span></div>
<div class="ln" style="top:2113.15px;color:#576166">47</div>
<div style="position:absolute;left:927px;top:828.70px;width:4.2px;height:40.45px;background:#74ade8"></div>
<div style="position:absolute;left:1005px;top:835.65px;width:24px;height:24px"><svg width="24" height="24" viewBox="0 0 24 24" style="overflow:visible"><path d="M5.8 2.5 V14" stroke="#8a93a0" stroke-width="3" stroke-linecap="round"/><circle cx="6.4" cy="18" r="3.9" fill="none" stroke="#8a93a0" stroke-width="3"/><circle cx="18.7" cy="5.7" r="5.3" fill="#8a93a0"/><path d="M17.8 10.5 Q17.2 16.6 10.6 17.6" fill="none" stroke="#8a93a0" stroke-width="3"/></svg></div>
<div class="cl" style="left:1045px;top:828.20px;color:#8a93a0">Agus Zubiaga, 2 weeks ago</div>
<svg style="position:absolute;left:1113px;top:821px" width="38" height="72" viewBox="1 0 38 72" preserveAspectRatio="none"><path d="M4 4 Q14 4 20 10 Q26 4 36 4 V12 Q26 12 24 18 V31 H28 V39 H24 V54 Q26 60 36 60 V68 Q26 68 20 62 Q14 68 4 68 V60 Q14 60 16 54 V39 H12 V31 H16 V18 Q14 12 4 12 Z" fill="#fff" stroke="#fff" stroke-width="3" stroke-linejoin="round"/><path d="M6 8 Q15 8 20 14 Q25 8 34 8 M20 14 V58 M6 64 Q15 64 20 58 Q25 64 34 64 M14 35 H26" fill="none" stroke="#000" stroke-width="3.2"/></svg>
</div></div>
<div style="position:absolute;left:91px;top:2154px;right:0;height:6px;background:#454a56"></div>
</div></div></div></body></html>
